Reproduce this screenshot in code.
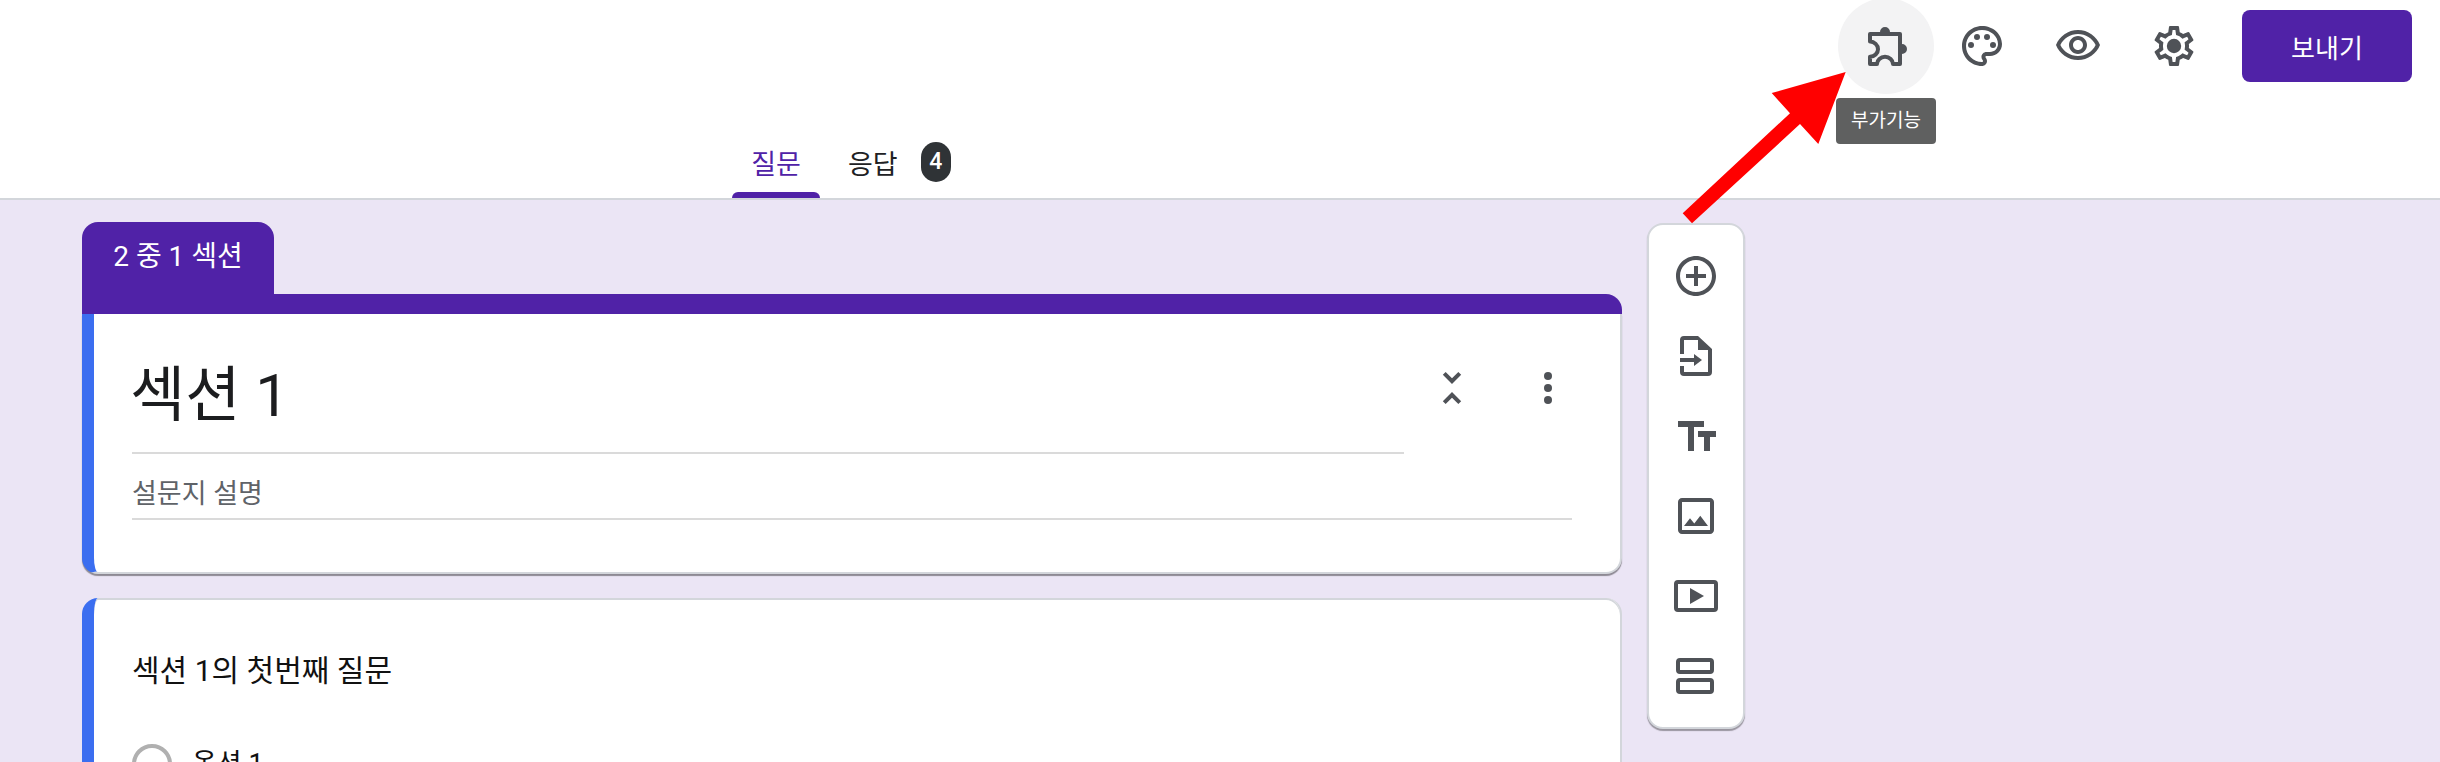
<script>
	const actions = [
		{ label: '부가기능', active: true },
		{ label: '테마' },
		{ label: '미리보기' },
		{ label: '설정' }
	];
</script>

<div class="page">
	<header class="header">
		<div class="top-row">
			<button class="action active" aria-label="부가기능">
				<svg viewBox="0 0 24 24">
					<path class="outline" stroke-linejoin="round" d="M4 6h15v15h-3.5a4 3.6 0 0 0-8 0H4v-3.6a4 3.8 0 0 0 0-7.6z" />
					<path d="M9 5a2.5 2.5 0 0 1 5 0zM20 11a2.5 2.5 0 0 1 0 5z" />
				</svg>
				<span class="tooltip">{actions[0].label}</span>
			</button>
			<button class="action" aria-label={actions[1].label}>
				<svg viewBox="0 0 24 24">
					<path d="M12 22C6.49 22 2 17.51 2 12S6.49 2 12 2s10 4.04 10 9c0 3.31-2.69 6-6 6h-1.77c-.28 0-.5.22-.5.5 0 .12.05.23.13.33.41.47.64 1.06.64 1.67 0 1.38-1.12 2.5-2.5 2.5zm0-18c-4.41 0-8 3.59-8 8s3.59 8 8 8c.28 0 .5-.22.5-.5 0-.16-.08-.28-.14-.35-.41-.46-.63-1.05-.63-1.65 0-1.38 1.12-2.5 2.5-2.5H16c2.21 0 4-1.79 4-4 0-3.86-3.59-7-8-7z" />
					<circle cx="6.5" cy="11.5" r="1.5" />
					<circle cx="9.5" cy="7.5" r="1.5" />
					<circle cx="14.5" cy="7.5" r="1.5" />
					<circle cx="17.5" cy="11.5" r="1.5" />
				</svg>
			</button>
			<button class="action" aria-label={actions[2].label}>
				<svg viewBox="0 0 24 24"><path d="M12 6c3.79 0 7.17 2.13 8.82 5.5C19.17 14.87 15.79 17 12 17s-7.17-2.13-8.82-5.5C4.83 8.13 8.21 6 12 6m0-2C7 4 2.73 7.11 1 11.5 2.73 15.89 7 19 12 19s9.27-3.11 11-7.5C21.27 7.11 17 4 12 4zm0 5c1.38 0 2.5 1.12 2.5 2.5S13.38 14 12 14s-2.5-1.12-2.5-2.5S10.62 9 12 9m0-2c-2.48 0-4.5 2.02-4.5 4.5S9.52 16 12 16s4.5-2.02 4.5-4.5S14.48 7 12 7z" /></svg>
			</button>
			<button class="action" aria-label={actions[3].label}>
				<svg viewBox="0 0 24 24">
					<path d="M19.43 12.98c.04-.32.07-.64.07-.98 0-.34-.03-.66-.07-.98l2.11-1.65c.19-.15.24-.42.12-.64l-2-3.46c-.09-.16-.26-.25-.44-.25-.06 0-.12.01-.17.03l-2.49 1c-.52-.4-1.08-.73-1.69-.98l-.38-2.65C14.46 2.18 14.25 2 14 2h-4c-.25 0-.46.18-.49.42l-.38 2.65c-.61.25-1.17.59-1.69.98l-2.49-1c-.06-.02-.12-.03-.18-.03-.17 0-.34.09-.43.25l-2 3.46c-.13.22-.07.49.12.64l2.11 1.65c-.04.32-.07.65-.07.98 0 .33.03.66.07.98l-2.11 1.65c-.19.15-.24.42-.12.64l2 3.46c.09.16.26.25.44.25.06 0 .12-.01.17-.03l2.49-1c.52.4 1.08.73 1.69.98l.38 2.65c.03.24.24.42.49.42h4c.25 0 .46-.18.49-.42l.38-2.65c.61-.25 1.17-.59 1.69-.98l2.49 1c.06.02.12.03.18.03.17 0 .34-.09.43-.25l2-3.46c.12-.22.07-.49-.12-.64l-2.11-1.65zm-1.98-1.71c.04.31.05.52.05.73 0 .21-.02.43-.05.73l-.14 1.13.89.7 1.08.84-.7 1.21-1.27-.51-1.04-.42-.9.68c-.43.32-.84.56-1.25.73l-1.06.43-.16 1.13-.2 1.35h-1.4l-.19-1.35-.16-1.13-1.06-.43c-.43-.18-.83-.41-1.23-.71l-.91-.7-1.06.43-1.27.51-.7-1.21 1.08-.84.89-.7-.14-1.13c-.03-.31-.05-.54-.05-.74s.02-.43.05-.73l.14-1.13-.89-.7-1.08-.84.7-1.21 1.27.51 1.04.42.9-.68c.43-.32.84-.56 1.25-.73l1.06-.43.16-1.13.2-1.35h1.39l.19 1.35.16 1.13 1.06.43c.43.18.83.41 1.23.71l.91.7 1.06-.43 1.27-.51.7 1.21-1.07.85-.89.7.14 1.13z" />
					<circle cx="12" cy="12" r="3.6" />
				</svg>
			</button>
			<button class="send">보내기</button>
		</div>
		<nav class="tabs">
			<div class="tab selected">질문</div>
			<div class="tab">응답<span class="badge">4</span></div>
		</nav>
	</header>

	<main class="main">
		<div class="column">
			<div class="section-tab">2 중 1 섹션</div>
			<section class="section-card">
				<div class="bar"></div>
				<div class="section-body">
					<div class="title-row">
						<div class="title-field">섹션 1</div>
						<button class="icon-btn" aria-label="접기">
							<svg viewBox="0 0 24 24"><path d="M7.41 18.59L8.83 20 12 16.83 15.17 20l1.41-1.41L12 14l-4.59 4.59zm9.18-13.18L15.17 4 12 7.17 8.83 4 7.41 5.41 12 10l4.59-4.59z" /></svg>
						</button>
						<button class="icon-btn" aria-label="더보기">
							<svg viewBox="0 0 24 24"><circle cx="12" cy="6" r="2" /><circle cx="12" cy="12" r="2" /><circle cx="12" cy="18" r="2" /></svg>
						</button>
					</div>
					<div class="desc-field">설문지 설명</div>
				</div>
			</section>
			<section class="question-card">
				<div class="question">섹션 1의 첫번째 질문</div>
				<div class="option"><span class="radio"></span>옵션 1</div>
			</section>
		</div>

		<aside class="toolbar">
			<button class="tool" aria-label="질문 추가">
				<svg viewBox="0 0 24 24"><path d="M13 7h-2v4H7v2h4v4h2v-4h4v-2h-4V7zm-1-5C6.48 2 2 6.48 2 12s4.48 10 10 10 10-4.48 10-10S17.52 2 12 2zm0 18c-4.41 0-8-3.59-8-8s3.59-8 8-8 8 3.59 8 8-3.59 8-8 8z" /></svg>
			</button>
			<button class="tool" aria-label="질문 가져오기">
				<svg viewBox="0 0 24 24"><path d="M6 2h7l7 6.5V20a2 2 0 0 1-2 2H6a2 2 0 0 1-2-2v-3h2v3h12V9h-5V4H6v7H4V4a2 2 0 0 1 2-2zM4 13h7v-2l4 3-4 3v-2H4z" /></svg>
			</button>
			<button class="tool" aria-label="제목 추가">
				<svg viewBox="0 0 24 24"><path d="M3 4.5v3h5v12h3v-12h5v-3zM13 9.5v3h3v7h3v-7h3v-3z" /></svg>
			</button>
			<button class="tool" aria-label="이미지 추가">
				<svg viewBox="0 0 24 24"><path d="M19 5v14H5V5h14m0-2H5c-1.1 0-2 .9-2 2v14c0 1.1.9 2 2 2h14c1.1 0 2-.9 2-2V5c0-1.1-.9-2-2-2zm-4.86 8.86l-3 3.87L9 13.14 6 17h12l-3.86-5.14z" /></svg>
			</button>
			<button class="tool" aria-label="동영상 추가">
				<svg viewBox="0 0 24 24"><path fill-rule="evenodd" d="M3 4h18a2 2 0 0 1 2 2v12a2 2 0 0 1-2 2H3a2 2 0 0 1-2-2V6a2 2 0 0 1 2-2zm0 2v12h18V6zM9 8l7 4-7 4z" /></svg>
			</button>
			<button class="tool" aria-label="섹션 추가">
				<svg viewBox="0 0 24 24"><rect class="outline" x="3" y="4" width="17" height="6" rx="1" /><rect class="outline" x="3" y="14" width="17" height="6" rx="1" /></svg>
			</button>
		</aside>
	</main>

	<!-- annotation arrow drawn over the screenshot -->
	<svg class="arrow" width="2440" height="762" viewBox="0 0 2440 762">
		<polygon points="1845.7,72 1771.7,93 1790,113.3 1682.7,213.3 1692,223.3 1800,124 1818.3,144" />
	</svg>
</div>

<style>
	:global(body) {
		margin: 0;
		background: #ebe5f5;
	}

	.page {
		position: relative;
		width: 2440px;
		height: 762px;
		overflow: hidden;
		background: #ebe5f5;
		font-family: Roboto, 'Noto Sans CJK KR', sans-serif;
		color: #202124;
	}

	button {
		border: none;
		background: none;
		padding: 0;
		font: inherit;
	}

	svg {
		display: block;
		flex-shrink: 0;
		width: 48px;
		height: 48px;
		fill: #4f5257;
	}

	.header {
		box-sizing: border-box;
		height: 200px;
		background: #fff;
		border-bottom: 2px solid #d3d6db;
	}

	.top-row {
		display: flex;
		justify-content: flex-end;
		align-items: flex-start;
		height: 132px;
		padding-right: 28px;
	}

	.action {
		position: relative;
		display: flex;
		align-items: center;
		justify-content: center;
		width: 96px;
		height: 96px;
		margin-top: -2px;
		border-radius: 50%;
	}

	.action.active {
		background: #f3f3f4;
	}

	.tooltip {
		position: absolute;
		top: 100px;
		left: -2px;
		width: 100px;
		height: 46px;
		border-radius: 4px;
		background: #5f6060;
		color: #fff;
		font-size: 19px;
		line-height: 46px;
		text-align: center;
	}

	.send {
		width: 170px;
		height: 72px;
		margin: 10px 0 0 20px;
		border-radius: 8px;
		background: #5022a7;
		color: #fff;
		font-size: 26px;
	}

	.tabs {
		display: flex;
		padding-left: 732px;
		height: 66px;
	}

	.tab {
		position: relative;
		display: flex;
		align-items: center;
		gap: 23px;
		box-sizing: border-box;
		height: 66px;
		padding: 0 20px 6px 28px;
		font-size: 27px;
		color: #202124;
	}

	.tab.selected {
		width: 88px;
		justify-content: center;
		padding: 0 0 6px;
		color: #5022a7;
	}

	.tab.selected::after {
		content: '';
		position: absolute;
		left: 0;
		right: 0;
		bottom: 0;
		height: 6px;
		border-radius: 6px 6px 0 0;
		background: #5022a7;
	}

	.badge {
		display: block;
		width: 30px;
		height: 40px;
		border-radius: 15px;
		background: #2f3336;
		color: #fff;
		font-size: 23px;
		font-weight: 500;
		line-height: 40px;
		text-align: center;
	}

	.main {
		display: flex;
		align-items: flex-start;
		gap: 25px;
		padding: 22px 0 0 82px;
	}

	.column {
		width: 1540px;
		flex-shrink: 0;
	}

	.section-tab {
		box-sizing: border-box;
		width: 192px;
		height: 72px;
		border-radius: 16px 16px 0 0;
		background: #5022a7;
		color: #fff;
		font-size: 28px;
		line-height: 70px;
		text-align: center;
	}

	.bar {
		height: 20px;
		border-radius: 0 16px 0 0;
		background: #5022a7;
	}

	.section-body {
		box-sizing: border-box;
		height: 260px;
		padding: 26px 48px 0 38px;
		background: #fff;
		border-left: 12px solid #3b6ef0;
		border-right: 2px solid #d3d6db;
		border-bottom: 2px solid #d3d6db;
		border-radius: 0 0 16px 16px;
		box-shadow: 0 2px 1px rgba(0, 0, 0, 0.4);
	}

	.title-row {
		display: flex;
		margin-right: -24px;
	}

	.title-field {
		box-sizing: border-box;
		flex-shrink: 0;
		width: 1272px;
		height: 114px;
		border-bottom: 2px solid #dadada;
		font-size: 60px;
		line-height: 112px;
		text-indent: -2px;
		color: #1c1d1f;
	}

	.icon-btn {
		display: flex;
		flex-shrink: 0;
		align-items: center;
		justify-content: center;
		width: 96px;
		height: 96px;
	}

	.desc-field {
		box-sizing: border-box;
		height: 66px;
		border-bottom: 2px solid #dadada;
		font-size: 27px;
		line-height: 80px;
		color: #5f6368;
	}

	.question-card {
		box-sizing: border-box;
		height: 300px;
		margin-top: 24px;
		padding: 46px 38px 0;
		background: #fff;
		border-left: 12px solid #3b6ef0;
		border-right: 2px solid #d3d6db;
		border-radius: 16px;
		box-shadow: inset 0 2px #d3d6db;
	}

	.question {
		font-size: 30px;
		line-height: 54px;
		color: #111;
	}

	.option {
		display: flex;
		align-items: center;
		gap: 20px;
		margin-top: 46px;
		font-size: 27px;
		line-height: 40px;
		color: #111;
	}

	.radio {
		box-sizing: border-box;
		width: 40px;
		height: 40px;
		border: 4px solid #b0b0b0;
		border-radius: 50%;
	}

	.toolbar {
		box-sizing: border-box;
		flex-shrink: 0;
		width: 98px;
		height: 506px;
		margin-top: 1px;
		padding-top: 11px;
		background: #fff;
		border: 2px solid #d3d6db;
		border-radius: 16px;
		box-shadow: 0 2px 1px rgba(0, 0, 0, 0.35);
	}

	.tool {
		display: flex;
		align-items: center;
		justify-content: center;
		width: 100%;
		height: 80px;
	}

	.outline {
		fill: none;
		stroke: #4f5257;
		stroke-width: 2;
	}

	svg.arrow {
		position: absolute;
		top: 0;
		left: 0;
		width: 2440px;
		height: 762px;
		fill: #ff0000;
		pointer-events: none;
	}
</style>
